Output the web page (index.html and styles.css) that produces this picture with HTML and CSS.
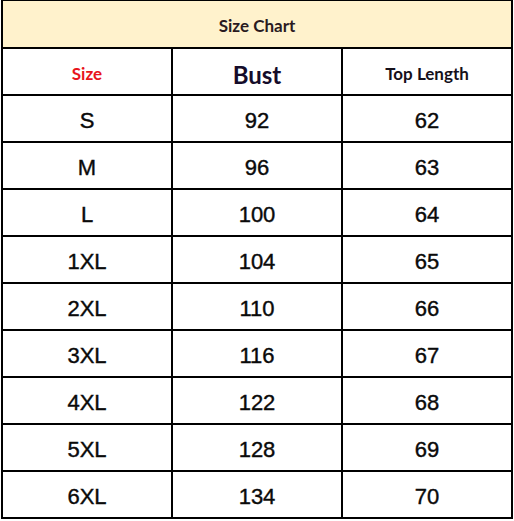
FILE: index.html
```html
<!DOCTYPE html>
<html>
<head>
<meta charset="utf-8">
<link rel="stylesheet" href="styles.css">
</head>
<body>
<div class="chart">
  <div class="title">Size Chart</div>
  <div class="cell label red">Size</div>
  <div class="cell label big">Bust</div>
  <div class="cell label">Top Length</div>

  <div class="cell">S</div><div class="cell">92</div><div class="cell">62</div>
  <div class="cell">M</div><div class="cell">96</div><div class="cell">63</div>
  <div class="cell">L</div><div class="cell">100</div><div class="cell">64</div>
  <div class="cell">1XL</div><div class="cell">104</div><div class="cell">65</div>
  <div class="cell">2XL</div><div class="cell">110</div><div class="cell">66</div>
  <div class="cell">3XL</div><div class="cell">116</div><div class="cell">67</div>
  <div class="cell">4XL</div><div class="cell">122</div><div class="cell">68</div>
  <div class="cell">5XL</div><div class="cell">128</div><div class="cell">69</div>
  <div class="cell">6XL</div><div class="cell">134</div><div class="cell">70</div>
</div>
</body>
</html>
```
FILE: styles.css
```css
html, body {
  margin: 0;
  padding: 0;
  background: #ffffff;
}
.chart {
  margin: -1px 0 0 1px;
  width: 508px;
  padding: 2px;
  background: #000;
  display: grid;
  grid-template-columns: 168px 168px 168px;
  grid-template-rows: 46px repeat(10, 45px);
  gap: 2px;
}
.title {
  grid-column: 1 / 4;
  background: #fff2cc;
  display: flex;
  align-items: center;
  justify-content: center;
  font-family: Lato, "Open Sans", sans-serif;
  font-weight: 700;
  font-size: 17px;
  color: #2a1a1f;
  padding-top: 2px;
}
.cell {
  background: #fff;
  display: flex;
  align-items: center;
  justify-content: center;
  font-family: "Liberation Sans", Arial, sans-serif;
  font-size: 22px;
  color: #0a0a0a;
  padding-top: 4px;
  -webkit-text-stroke: 0.4px #0a0a0a;
}
.label {
  font-family: Lato, "Open Sans", sans-serif;
  font-weight: 700;
  font-size: 17px;
  color: #15101a;
  -webkit-text-stroke: 0;
}
.label.red {
  color: #e8141c;
}
.label.big {
  font-size: 24px;
  color: #150c2a;
  padding-top: 6px;
}
```
